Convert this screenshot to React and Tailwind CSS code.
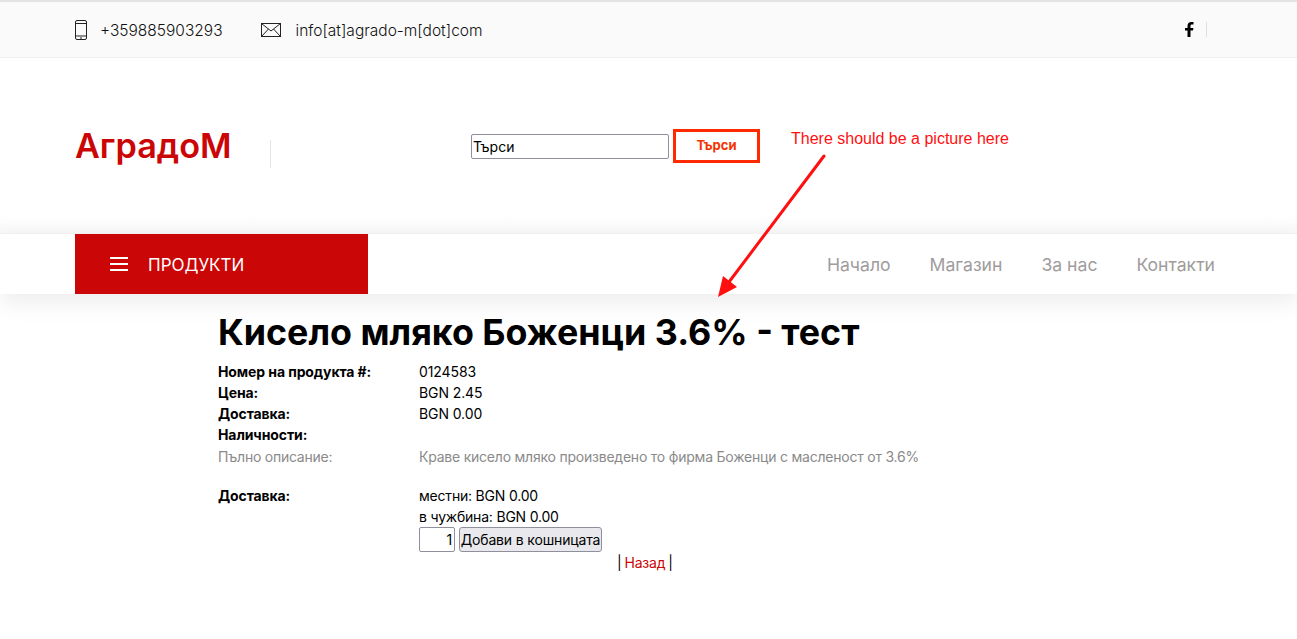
import { useState } from 'react';

const FONT = "font-['Inter','Noto_Sans',sans-serif]";

const NAV = ['Начало', 'Магазин', 'За нас', 'Контакти'];

const ROWS = [
  { label: 'Номер на продукта #:', value: '0124583' },
  { label: 'Цена:', value: 'BGN 2.45' },
  { label: 'Доставка:', value: 'BGN 0.00' },
  { label: 'Наличности:', value: '' },
];

function PhoneIcon() {
  return (
    <svg width="12" height="20" viewBox="0 0 12 20" fill="none" stroke="#222" strokeWidth="1">
      <rect x="0.5" y="0.5" width="11" height="19" rx="1.5" />
      <path d="M0.5 3.5h11M0.5 16h11M5 18h2" />
    </svg>
  );
}

function MailIcon() {
  return (
    <svg width="20" height="14" viewBox="0 0 20 14" fill="none" stroke="#222" strokeWidth="1">
      <rect x="0.5" y="0.5" width="19" height="13" />
      <path d="M0.5 0.5L10 8l9.5-7.5M0.5 13.5L7.5 6M19.5 13.5L12.5 6" />
    </svg>
  );
}

function FacebookIcon() {
  return (
    <svg width="9" height="15" viewBox="0 0 9 15" fill="#000">
      <path d="M2.5 15V8.5H0V6h2.5V4C2.5 1.500 4 0 6.300 0c1 0 1.900.1 2.200.1v2.400H7c-1.200 0-1.500.6-1.500 1.400V6h2.900l-.4 2.500H5.500V15z" />
    </svg>
  );
}

function BurgerIcon() {
  return (
    <svg width="18" height="14" viewBox="0 0 18 14" fill="#fff">
      <path d="M0 0h18v2H0zM0 6h18v2H0zM0 12h18v2H0z" />
    </svg>
  );
}

export default function App() {
  const [qty] = useState('1');

  return (
    <div className={`${FONT} relative h-[639px] overflow-hidden bg-white text-black`}>

      {/* Top bar */}
      <div className="h-[58px] border-t-2 border-b border-t-[#e3e3e3] border-b-[#f0f0f0] bg-[#fafafa]">
        <div className="flex h-full items-center justify-between pl-[75px] pr-[90px] text-[15.5px] font-light text-[#111]">
          <div className="flex items-center">
            <PhoneIcon />
            <span className="relative top-[1px] ml-[13px]">+359885903293</span>
            <span className="ml-[38px]"><MailIcon /></span>
            <span className="relative top-[1px] ml-[15px]">info[at]agrado-m[dot]com</span>
          </div>
          <div className="flex items-center">
            <FacebookIcon />
            <span className="ml-[12px] h-[15px] w-px bg-[#e0e0e0]" />
          </div>
        </div>
      </div>

      {/* Logo + search */}
      <div className="flex h-[175px] items-center bg-gradient-to-b from-white from-[90%] to-[#f8f8f8] pl-[75px]">
        <div className="flex h-[40px] w-[196px] items-center justify-between">
          <span className="relative top-[1px] text-[34.2px] font-semibold leading-none text-[#cb0606]">АградоМ</span>
          <span className="mt-[16px] h-[28px] w-px bg-[#e3e3e3]" />
        </div>
        <div className="ml-[200px] flex items-center">
          <input
            readOnly
            value="Търси"
            className="mt-[1px] h-[25px] w-[198px] rounded-[2px] border border-[#8f8f9d] bg-white px-[1px] text-[14px] text-black outline-none"
          />
          <button className="ml-[4px] h-[34px] w-[87px] border-[3px] border-[#ff2a00] bg-white text-[13px] font-bold text-[#f53300]">
            Търси
          </button>
        </div>
      </div>

      {/* Nav */}
      <div className="flex h-[61px] items-center justify-between border-t border-[#f0f0f0] bg-white pl-[75px] pr-[82px] shadow-[0_8px_24px_rgba(0,0,0,0.08)]">
        <div className="flex h-[60px] w-[293px] items-center bg-[#cb0606] pl-[35px] text-white">
          <BurgerIcon />
          <span className="relative top-[2px] ml-[20px] text-[17px]">ПРОДУКТИ</span>
        </div>
        <nav className="relative top-[1px] flex gap-[39px] text-[17.6px] text-[#a09c9c]">
          {NAV.map((n) => (
            <a key={n}>{n}</a>
          ))}
        </nav>
      </div>

      {/* Product */}
      <div className="pl-[218px] pt-[16px]">
        <h1 className="text-[35.8px] font-bold leading-[44px]">Кисело мляко Боженци 3.6% - тест</h1>
        <div className="mt-[7px] grid grid-cols-[201px_1fr] text-[14px] leading-[21px] tracking-[-0.1px]">
          {ROWS.map((r) => (
            <div key={r.label} className="contents">
              <b className="font-bold">{r.label}</b>
              <span>{r.value}</span>
            </div>
          ))}
          <span className="mt-[1px] tracking-[-0.25px] text-[#8a8a8a]">Пълно описание:</span>
          <span className="mt-[1px] tracking-[-0.22px] text-[#8a8a8a]">Краве кисело мляко произведено то фирма Боженци с масленост от 3.6%</span>
          <b className="mt-[18px] font-bold">Доставка:</b>
          <div className="mt-[18px] tracking-[-0.2px]">
            <div>местни: BGN 0.00</div>
            <div>в чужбина: BGN 0.00</div>
            <div className="flex items-center gap-[4px]">
              <input
                readOnly
                value={qty}
                className="h-[25px] w-[36px] rounded-[2px] border border-[#8f8f9d] bg-white px-[2px] text-right text-[14px] outline-none"
              />
              <button className="h-[25px] w-[143px] whitespace-nowrap rounded-[3px] border border-[#8f8f9d] bg-[#e9e9ed] px-0 text-[14px] tracking-[-0.15px] text-black">
                Добави в кошницата
              </button>
            </div>
          </div>
        </div>
        <div className="flex items-center pl-[399px] text-[14px] leading-[21px] tracking-[-0.2px]">
          <span>|</span>
          <a className="mx-[3px] text-[#cb0606]">Назад</a>
          <span>|</span>
        </div>
      </div>

      {/* Annotation over the page */}
      <div className="absolute left-[791px] top-[130px] font-['Liberation_Sans',sans-serif] text-[16px] leading-[18px] text-[#ff0f0f]">
        There should be a picture here
      </div>
      <svg className="absolute left-[710px] top-[150px]" width="120" height="150" viewBox="0 0 120 150" fill="none">
        <path d="M114 6L16 136" stroke="#ff0f0f" strokeWidth="3" strokeLinecap="round" />
        <path d="M8 147L13 126L27 137Z" fill="#ff0f0f" />
      </svg>
    </div>
  );
}
